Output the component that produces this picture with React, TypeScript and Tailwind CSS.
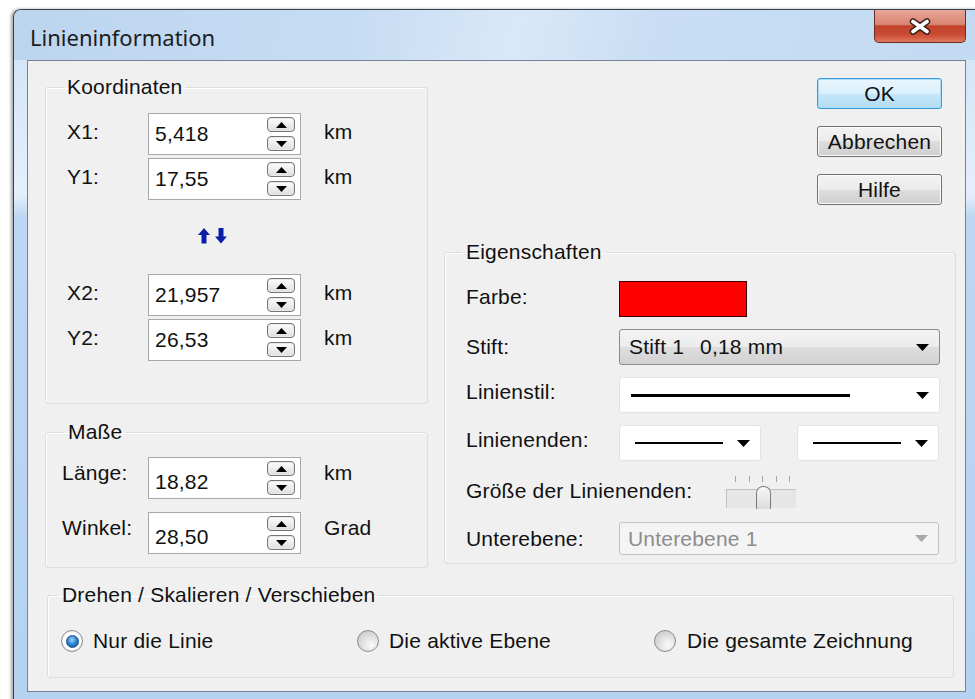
import type { ReactNode } from "react";

const DropArrow = ({ color = "#000" }: { color?: string }) => (
  <svg width="13" height="7" viewBox="0 0 13 7" className="shrink-0">
    <path d="M0 0H13L6.5 7Z" fill={color} />
  </svg>
);

const SpinButton = ({ down }: { down?: boolean }) => (
  <div className="flex h-[15px] w-[28px] items-center justify-center rounded-[4px] border border-[#767676] bg-[linear-gradient(180deg,#fdfdfd,#dedede)] shadow-[inset_0_0_0_1px_#e9e9e9]">
    <svg width="11" height="6" viewBox="0 0 11 6">
      <path d={down ? "M0 0H11L5.5 6Z" : "M0 6H11L5.5 0Z"} fill="#000" />
    </svg>
  </div>
);

const NumberField = ({ value, textClass = "" }: { value: string; textClass?: string }) => (
  <div className="flex h-[42px] w-[153px] shrink-0 items-center justify-between border border-[#a8a8a8] bg-white pl-[6px] pr-[5px]">
    <span className={textClass}>{value}</span>
    <div className="flex flex-col gap-[4px]">
      <SpinButton />
      <SpinButton down />
    </div>
  </div>
);

const FieldRow = ({
  label,
  value,
  unit,
  className = "",
  labelClass,
  shiftClass,
  textClass,
}: {
  label: string;
  value: string;
  unit: string;
  className?: string;
  labelClass: string;
  shiftClass: string;
  textClass?: string;
}) => (
  <div className={`flex h-[42px] items-center ${className}`}>
    <span className={`${labelClass} ${shiftClass}`}>{label}</span>
    <NumberField value={value} textClass={textClass} />
    <span className={`ml-[23px] ${shiftClass}`}>{unit}</span>
  </div>
);

const Group = ({
  title,
  className,
  legendClass,
  children,
}: {
  title: string;
  className: string;
  legendClass: string;
  children: ReactNode;
}) => (
  <fieldset className={`rounded-[3px] border border-[#d5dfe5] shadow-[inset_1px_1px_0_#ffffff] ${className}`}>
    <legend className={`px-[4px] leading-[22px] ${legendClass}`}>{title}</legend>
    {children}
  </fieldset>
);

const Button = ({ label, focused }: { label: string; focused?: boolean }) => (
  <button
    className={
      focused
        ? "h-[31px] w-[125px] rounded-[3px] border border-[#3c9bd8] bg-[linear-gradient(180deg,#eaf6fd,#d9f0fc_50%,#c6e7f9_50%,#b4dcf3)] shadow-[inset_0_0_0_1px_#a7dcf7]"
        : "h-[31px] w-[125px] rounded-[3px] border border-[#707070] bg-[linear-gradient(180deg,#f2f2f2,#ebebeb_50%,#dddddd_50%,#cfcfcf)] shadow-[inset_0_0_0_1px_#fbfbfb]"
    }
  >
    {label}
  </button>
);

const Radio = ({ checked }: { checked?: boolean }) => (
  <span
    className={`flex h-[22px] w-[22px] shrink-0 items-center justify-center rounded-full border border-[#8a8b8b] ${
      checked
        ? "bg-[radial-gradient(circle_at_50%_50%,#ffffff_55%,#d9d9d9)]"
        : "bg-[radial-gradient(circle_at_65%_70%,#fbfbfb,#d2d2d2_70%,#c3c3c3)]"
    }`}
  >
    {checked && (
      <span className="h-[13px] w-[13px] rounded-full border border-[#1b4f86] bg-[radial-gradient(circle_at_45%_35%,#9ad6fb,#2a82cf_50%,#0c4f95)]" />
    )}
  </span>
);

const PropRow = ({ label, className = "", labelShift = "", children }: { label: string; className?: string; labelShift?: string; children: ReactNode }) => (
  <div className={`flex items-center ${className}`}>
    <span className={`w-[153px] shrink-0 whitespace-nowrap ${labelShift}`}>{label}</span>
    {children}
  </div>
);

export default function App() {
  return (
    <div className="h-[699px] w-[975px] overflow-hidden bg-white font-['Liberation_Sans',Arial,sans-serif] text-[21px] leading-[22px] tracking-[0.2px] text-[#111]">
      {/* window frame */}
      <div className="ml-[13px] mt-[9px] h-[700px] w-[964px] rounded-tl-[8px] border-l border-t border-[#36414e] bg-[linear-gradient(180deg,#cfe2f6_0px,#e4effb_185px,#bcd7f3_207px,#b5d2f1_100%)] shadow-[-2px_0_3px_rgba(0,0,0,0.35)]">
        {/* title bar */}
        <div className="flex h-[50px] items-start justify-between rounded-tl-[7px] bg-[linear-gradient(100deg,#bcd5ef_0%,#c6dcf3_35%,#d9e8f8_52%,#c9def4_66%,#c2daf2_100%)] pr-[11px]">
          <span className="pl-[16px] pt-[14px] font-['Noto_Sans',sans-serif] text-[22px] leading-[26px] tracking-normal text-[#1c1c1c]">
            Linieninformation
          </span>
          <div className="flex h-[33px] w-[92px] items-center justify-center rounded-b-[5px] border border-t-0 border-[#6b2c22] bg-[linear-gradient(180deg,#e8a797_0%,#d98472_45%,#c2412a_50%,#c84a32_75%,#e0785c_100%)]">
            <svg width="24" height="17" viewBox="0 0 24 17">
              <path d="M5 3.5 L19 13.5 M19 3.5 L5 13.5" stroke="#3d1b15" strokeWidth="6.5" strokeLinecap="round" />
              <path d="M5 3.5 L19 13.5 M19 3.5 L5 13.5" stroke="#ffffff" strokeWidth="3.8" strokeLinecap="round" />
            </svg>
          </div>
        </div>

        {/* client area */}
        <div className="ml-[13px] h-[632px] w-[939px] border border-[#76828f] bg-[#f0f0f0] pl-[17px] pt-[15px]">
          <div className="flex items-start">
            {/* left column */}
            <div className="flex w-[383px] flex-col gap-[17px]">
              <Group title="Koordinaten" className="h-[328px]" legendClass="ml-[17px]">
                <div className="flex flex-col pl-[21px] pt-[15px]">
                  <FieldRow label="X1:" value="5,418" unit="km" labelClass="w-[81px]" shiftClass="-mt-[4px]" />
                  <FieldRow label="Y1:" value="17,55" unit="km" className="mt-[3px]" labelClass="w-[81px]" shiftClass="-mt-[4px]" />
                  <svg width="31" height="16" viewBox="0 0 31 16" className="ml-[131px] mt-[28px]">
                    <path d="M6 0 L12 7 H8.5 V15.5 H3.5 V7 H0 Z" fill="#0b1fa6" />
                    <path d="M23 15.5 L29 8.5 H25.5 V0 H20.5 V8.5 H17 Z" fill="#0b1fa6" />
                  </svg>
                  <FieldRow label="X2:" value="21,957" unit="km" className="mt-[30px]" labelClass="w-[81px]" shiftClass="-mt-[4px]" />
                  <FieldRow label="Y2:" value="26,53" unit="km" className="mt-[3px]" labelClass="w-[81px]" shiftClass="-mt-[4px]" />
                </div>
              </Group>
              <Group title="Maße" className="h-[147px]" legendClass="ml-[18px]">
                <div className="flex flex-col pl-[16px] pt-[14px]">
                  <FieldRow label="Länge:" value="18,82" unit="km" labelClass="w-[86px]" shiftClass="-mt-[10px]" textClass="pt-[8px]" />
                  <FieldRow label="Winkel:" value="28,50" unit="Grad" className="mt-[13px]" labelClass="w-[86px]" shiftClass="-mt-[10px]" textClass="pt-[8px]" />
                </div>
              </Group>
            </div>

            {/* right column */}
            <div className="ml-[16px] flex w-[512px] flex-col">
              <div className="flex h-[165px] flex-col items-end gap-[17px] pr-[14px] pt-[2px]">
                <Button label="OK" focused />
                <Button label="Abbrechen" />
                <Button label="Hilfe" />
              </div>
              <Group title="Eigenschaften" className="h-[323px]" legendClass="ml-[17px]">
                <div className="flex flex-col pl-[21px] pt-[18px]">
                  <PropRow label="Farbe:" className="h-[36px]" labelShift="-mt-[4px]">
                    <div className="h-[36px] w-[128px] border border-[#3a0000] bg-[#ff0000]" />
                  </PropRow>
                  <PropRow label="Stift:" className="mt-[12px] h-[36px]">
                    <div className="flex h-[36px] w-[321px] items-center rounded-[3px] border border-[#8a8a8a] bg-[linear-gradient(180deg,#f3f3f3,#ececec_50%,#dedede_50%,#d2d2d2)] pl-[9px] pr-[10px]">
                      <span className="w-[71px]">Stift 1</span>
                      <span className="flex-1">0,18 mm</span>
                      <DropArrow />
                    </div>
                  </PropRow>
                  <PropRow label="Linienstil:" className="mt-[12px] h-[36px]" labelShift="-mt-[6px]">
                    <div className="flex h-[36px] w-[321px] items-center rounded-[3px] border border-[#e2e2e2] bg-white pl-[11px] pr-[10px]">
                      <span className="h-[3px] w-[219px] bg-black" />
                      <span className="flex-1" />
                      <DropArrow />
                    </div>
                  </PropRow>
                  <PropRow label="Linienenden:" className="mt-[12px] h-[36px]" labelShift="-mt-[6px]">
                    <div className="flex gap-[36px]">
                      <div className="flex h-[36px] w-[142px] items-center rounded-[3px] border border-[#e2e2e2] bg-white pl-[15px] pr-[10px]">
                        <span className="h-[2px] w-[88px] bg-black" />
                        <span className="flex-1" />
                        <DropArrow />
                      </div>
                      <div className="flex h-[36px] w-[142px] items-center rounded-[3px] border border-[#e2e2e2] bg-white pl-[15px] pr-[10px]">
                        <span className="h-[2px] w-[88px] bg-black" />
                        <span className="flex-1" />
                        <DropArrow />
                      </div>
                    </div>
                  </PropRow>
                  <PropRow label="Größe der Linienenden:" className="mt-[14px] h-[32px]">
                    <div className="ml-[107px] mt-[1px] flex w-[70px] flex-col">
                      <div className="flex h-[6px] justify-between pl-[9px] pr-[6px]">
                        {[0, 1, 2, 3, 4].map((t) => (
                          <span key={t} className="h-[6px] w-px bg-[#a6a6a6]" />
                        ))}
                      </div>
                      <div className="relative mt-[7px] h-[19px] w-[70px] border-l border-t border-[#c2c2c2] bg-[#e6e6e6]">
                        <span className="absolute -top-[4px] left-[29px] h-[23px] w-[15px] rounded-t-[7px] border border-b-0 border-[#7b7b7b] bg-[linear-gradient(180deg,#f7f7f7,#dcdcdc)]" />
                      </div>
                    </div>
                  </PropRow>
                  <PropRow label="Unterebene:" className="mt-[15px] h-[33px]">
                    <div className="flex h-[33px] w-[320px] items-center rounded-[3px] border border-[#c3c3c3] bg-[#f4f4f4] pl-[8px] pr-[10px] text-[#8c8c8c]">
                      <span className="flex-1">Unterebene 1</span>
                      <DropArrow color="#a9a9a9" />
                    </div>
                  </PropRow>
                </div>
              </Group>
            </div>
          </div>

          {/* bottom group */}
          <Group title="Drehen / Skalieren / Verschieben" className="ml-[2px] mt-[16px] h-[94px] w-[907px]" legendClass="ml-[10px]">
            <div className="grid grid-cols-[296px_297px_auto] pl-[13px] pt-[24px]">
              <label className="flex items-center gap-[10px]">
                <Radio checked />
                <span>Nur die Linie</span>
              </label>
              <label className="flex items-center gap-[10px]">
                <Radio />
                <span>Die aktive Ebene</span>
              </label>
              <label className="flex items-center gap-[11px]">
                <Radio />
                <span>Die gesamte Zeichnung</span>
              </label>
            </div>
          </Group>
        </div>
      </div>
    </div>
  );
}
